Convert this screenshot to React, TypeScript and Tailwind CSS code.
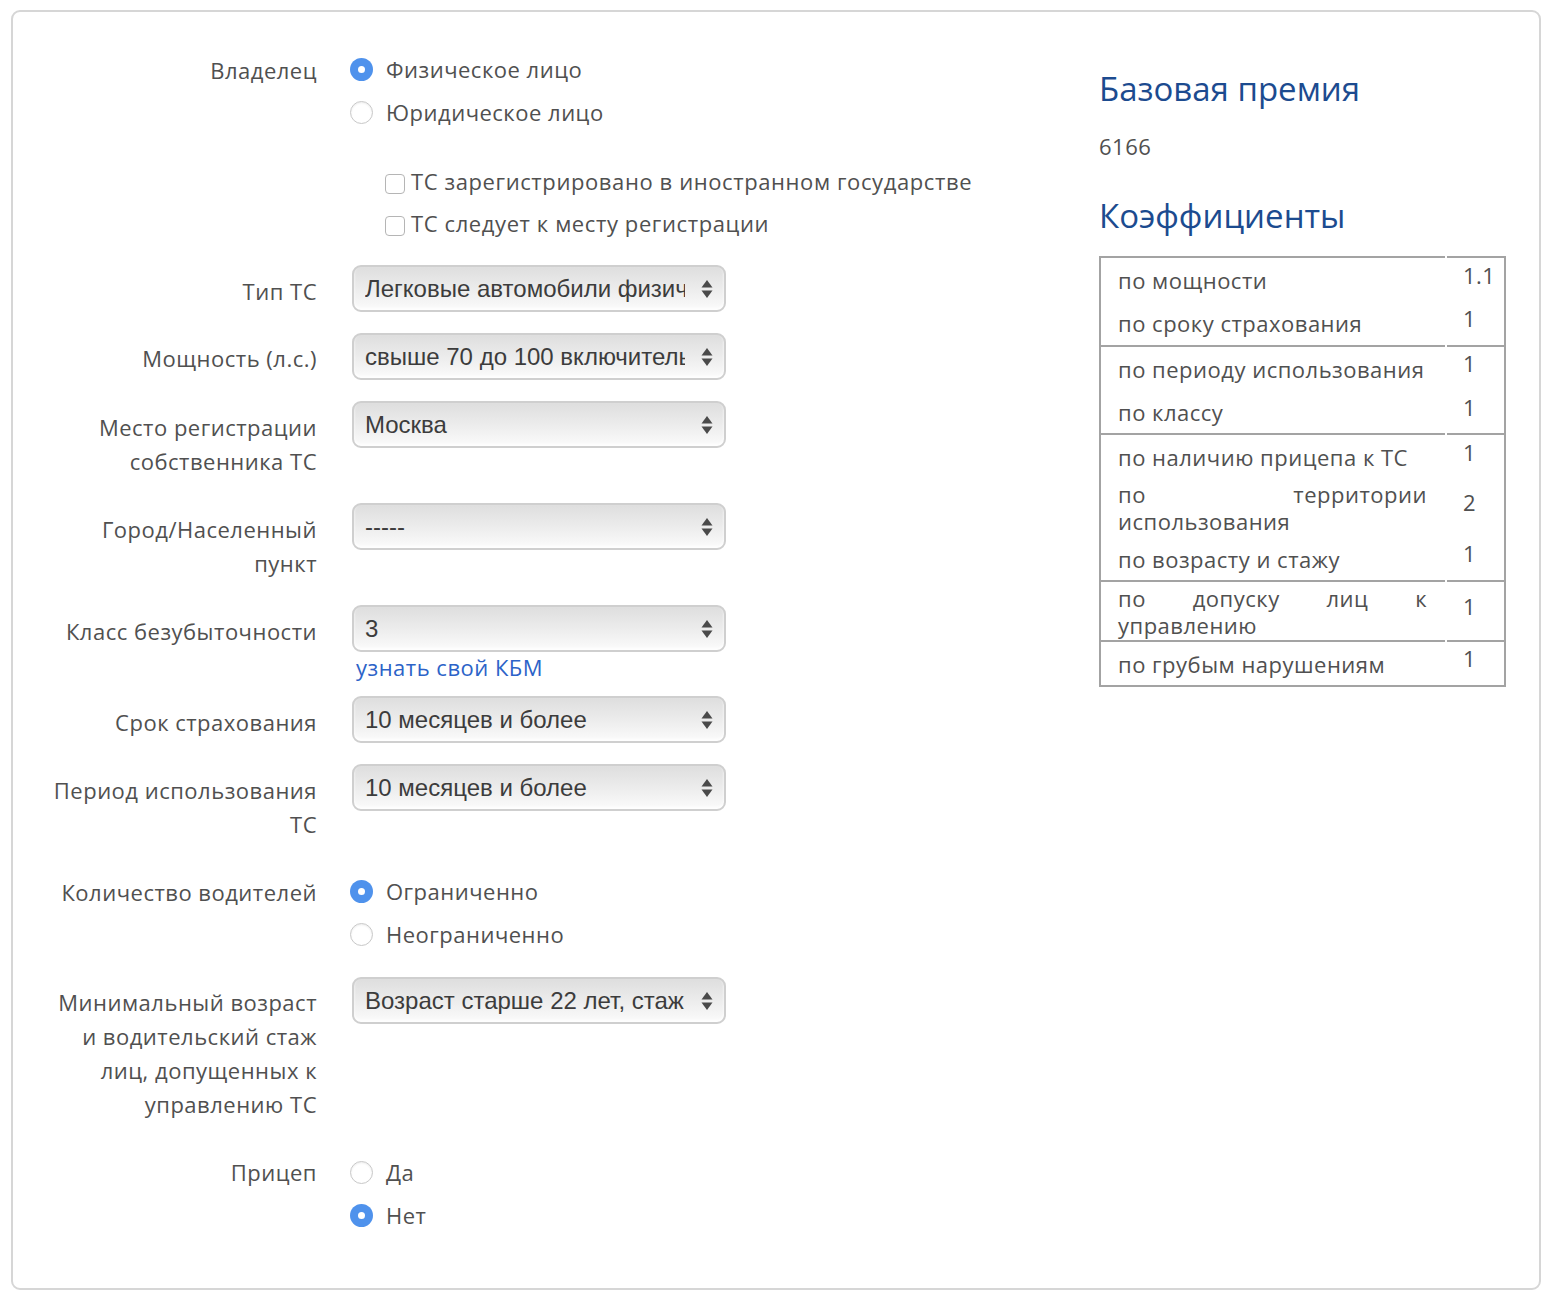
import React from 'react';

const exo = { fontFamily: '"Open Sans", "Noto Sans", sans-serif', letterSpacing: '0.5px' };

const Radio = ({ checked, label }: { checked?: boolean; label: string }) => (
  <div className="flex h-[43px] items-center">
    {checked ? (
      <span className="flex h-[23px] w-[23px] items-center justify-center rounded-full bg-[#4f92ec]">
        <span className="h-[7px] w-[7px] rounded-full bg-white" />
      </span>
    ) : (
      <span className="h-[23px] w-[23px] rounded-full border border-[#c8c8c8] bg-white shadow-[inset_0_1px_2px_rgba(0,0,0,0.08)]" />
    )}
    <span className="ml-[13px] text-[22px] text-[#505050]">{label}</span>
  </div>
);

const Check = ({ label }: { label: string }) => (
  <div className="flex h-[42px] items-center pl-[33px]">
    <span className="mt-[6px] h-[20px] w-[20px] rounded-[4px] border border-[#b5b5b5] bg-white" />
    <span className="ml-[6px] text-[22px] tracking-[0.6px] text-[#505050]">{label}</span>
  </div>
);

const Select = ({ value }: { value: string }) => (
  <div
    className="flex h-[47px] w-[374px] items-center rounded-[9px] border-2 border-[#cfcfcf] bg-gradient-to-b from-[#dedede] via-[#ececec] to-[#fbfbfb] pl-[11px] pr-[10px] shadow-[inset_0_-2px_3px_rgba(255,255,255,0.9)]"
    style={{ fontFamily: '"Liberation Sans", Arial, sans-serif', letterSpacing: '0px' }}
  >
    <span className="w-[320px] overflow-hidden whitespace-nowrap text-[24px] text-[#3c3c3c]">{value}</span>
    <svg className="ml-auto" width="14" height="22" viewBox="0 0 14 22">
      <path d="M7 2 L12.5 9.5 L1.5 9.5 Z" fill="#4a4a4a" />
      <path d="M7 20 L12.5 12.5 L1.5 12.5 Z" fill="#4a4a4a" />
    </svg>
  </div>
);

const Label = ({ children, mt }: { children: React.ReactNode; mt: string }) => (
  <div className={`w-[304px] shrink-0 text-right text-[22px] leading-[34px] text-[#505050] ${mt}`}>{children}</div>
);

type Row = { label: string; value: string; two?: boolean };

const groups: Row[][] = [
  [
    { label: 'по мощности', value: '1.1' },
    { label: 'по сроку страхования', value: '1' },
  ],
  [
    { label: 'по периоду использования', value: '1' },
    { label: 'по классу', value: '1' },
  ],
  [
    { label: 'по наличию прицепа к ТС', value: '1' },
    { label: 'по территории использования', value: '2', two: true },
    { label: 'по возрасту и стажу', value: '1' },
  ],
  [{ label: 'по допуску лиц к управлению', value: '1', two: true }],
  [{ label: 'по грубым нарушениям', value: '1' }],
];

export default function App() {
  return (
    <div className="min-h-[1304px] bg-white pl-[11px] pt-[10px]" style={exo}>
      <div className="flex h-[1280px] w-[1530px] rounded-[9px] border-2 border-[#d6d6d6]">
        {/* форма */}
        <div className="w-[1086px] shrink-0 pt-[36px]">
          <div className="flex h-[112px]">
            <Label mt="mt-[5px]">Владелец</Label>
            <div className="ml-[33px]">
              <Radio checked label="Физическое лицо" />
              <Radio label="Юридическое лицо" />
            </div>
          </div>

          <div className="flex h-[105px]">
            <div className="w-[304px] shrink-0" />
            <div className="ml-[35px]">
              <Check label="ТС зарегистрировано в иностранном государстве" />
              <Check label="ТС следует к месту регистрации" />
            </div>
          </div>

          <div className="flex h-[68px]">
            <Label mt="mt-[9px]">Тип ТС</Label>
            <div className="ml-[35px]">
              <Select value="Легковые автомобили физических лиц" />
            </div>
          </div>

          <div className="flex h-[68px]">
            <Label mt="mt-[8px]">Мощность (л.с.)</Label>
            <div className="ml-[35px]">
              <Select value="свыше 70 до 100 включительно" />
            </div>
          </div>

          <div className="flex h-[102px]">
            <Label mt="mt-[9px]">
              Место регистрации
              <br />
              собственника ТС
            </Label>
            <div className="ml-[35px]">
              <Select value="Москва" />
            </div>
          </div>

          <div className="flex h-[102px]">
            <Label mt="mt-[9px]">
              Город/Населенный
              <br />
              пункт
            </Label>
            <div className="ml-[35px]">
              <Select value="-----" />
            </div>
          </div>

          <div className="flex h-[91px]">
            <Label mt="mt-[9px]">Класс безубыточности</Label>
            <div className="ml-[35px]">
              <Select value="3" />
              <a className="block pl-[4px] text-[22px] leading-[30px] text-[#2c63c8]">узнать свой КБМ</a>
            </div>
          </div>

          <div className="flex h-[68px]">
            <Label mt="mt-[9px]">Срок страхования</Label>
            <div className="ml-[35px]">
              <Select value="10 месяцев и более" />
            </div>
          </div>

          <div className="flex h-[106px]">
            <Label mt="mt-[9px]">
              Период использования
              <br />
              ТС
            </Label>
            <div className="ml-[35px]">
              <Select value="10 месяцев и более" />
            </div>
          </div>

          <div className="flex h-[107px]">
            <Label mt="mt-[5px]">Количество водителей</Label>
            <div className="ml-[33px]">
              <Radio checked label="Ограниченно" />
              <Radio label="Неограниченно" />
            </div>
          </div>

          <div className="flex h-[174px]">
            <Label mt="mt-[8px]">
              Минимальный возраст
              <br />
              и водительский стаж
              <br />
              лиц, допущенных к
              <br />
              управлению ТС
            </Label>
            <div className="ml-[35px]">
              <Select value="Возраст старше 22 лет, стаж свыше 3 лет" />
            </div>
          </div>

          <div className="flex">
            <Label mt="mt-[4px]">Прицеп</Label>
            <div className="ml-[33px]">
              <Radio label="Да" />
              <Radio checked label="Нет" />
            </div>
          </div>
        </div>

        {/* расчёт */}
        <div className="pt-[57px]">
          <h2 className="text-[33px] leading-[40px] tracking-normal text-[#1c4b8f]">Базовая премия</h2>
          <div className="mt-[22px] text-[22px] leading-[30px] text-[#505050]">6166</div>
          <h2 className="mt-[35px] text-[33px] leading-[40px] tracking-normal text-[#1c4b8f]">Коэффициенты</h2>

          <div className="mt-[20px] w-[407px] border-b-2 border-l-2 border-r-2 border-[#a3a3a3]">
            {groups.map((g, gi) => (
              <div key={gi} className="flex gap-[2px]">
                <div className="w-[344px] border-t-2 border-[#a3a3a3]">
                  {g.map((r, ri) => (
                    <div
                      key={ri}
                      className="flex min-h-[43.3px] items-center pb-[1px] pl-[17px] pr-[18px] pt-[3px] text-[22px] leading-[27px] text-[#505050]"
                      style={{ textAlign: 'justify' }}
                    >
                      <span className="block w-full">{r.label}</span>
                    </div>
                  ))}
                </div>
                <div className="flex-1 border-t-2 border-[#a3a3a3]">
                  {g.map((r, ri) => (
                    <div
                      key={ri}
                      className={`flex items-center pb-[9px] pl-[16px] text-[22px] text-[#505050] ${r.two ? 'h-[58px]' : 'h-[43.3px]'}`}
                    >
                      {r.value}
                    </div>
                  ))}
                </div>
              </div>
            ))}
          </div>
        </div>
      </div>
    </div>
  );
}
